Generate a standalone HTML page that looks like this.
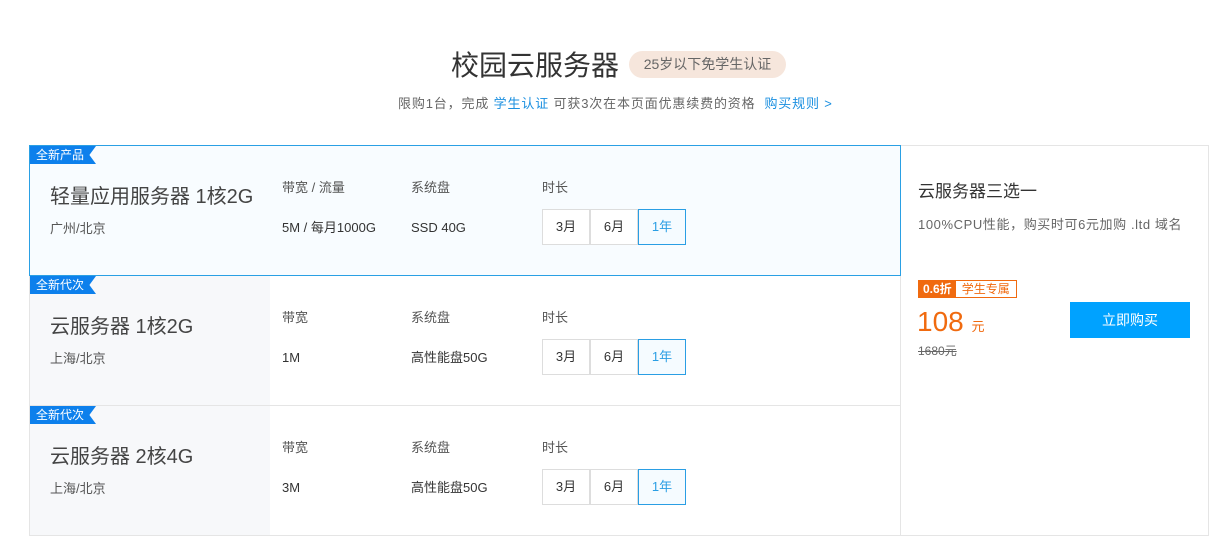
<!DOCTYPE html>
<html><head><meta charset="utf-8"><style>
*{margin:0;padding:0;box-sizing:border-box}
body{width:1217px;height:545px;background:#fff;font-family:"Liberation Sans","Noto Sans CJK SC",sans-serif;color:#333;position:relative;overflow:hidden}
.a{position:absolute;white-space:nowrap}
div{line-height:1.3}
.title{left:0;width:1070px;text-align:center;top:48px;font-size:28px;color:#333}
.badge{left:629px;top:51px;width:157px;height:27px;border-radius:14px;background:#f6e6dc;font-size:14px;color:#666;text-align:center;line-height:27px}
.sub{left:398px;top:96px;font-size:13px;color:#666;letter-spacing:0.85px}
.sub b{font-weight:normal;color:#1a8fe0}
.row{position:absolute;left:29px;width:872px;height:131px;border:1px solid #e5e5e5;background:#fff}
.row .lc{position:absolute;left:0;top:0;bottom:0;width:240px;background:#f7f8fa}
.sel{border:1px solid #2aa0e4;background:#f8fcff;z-index:2}
.tag{position:absolute;left:0;top:0;height:18px;width:66px;background:#0d80ec;color:#fff;font-size:12px;line-height:18px;padding-left:6px;clip-path:polygon(0 0,100% 0,90% 50%,100% 100%,0 100%)}
.name{position:absolute;left:20px;top:38px;font-size:20px;color:#444;line-height:26px}
.loc{position:absolute;left:20px;top:74px;font-size:13px;color:#555;line-height:18px}
.lb{position:absolute;top:33px;font-size:13px;color:#555;line-height:18px}
.vl{position:absolute;top:73px;font-size:13px;color:#333;line-height:18px}
.btn{position:absolute;top:63px;width:48px;height:36px;border:1px solid #ddd;background:#fff;font-size:13px;text-align:center;line-height:34px;color:#333}
.btn.on{border-color:#2a9ee4;color:#2a9ee4;background:#f5fbff;z-index:1}
.right{position:absolute;left:900px;top:145px;width:309px;height:391px;border:1px solid #e5e5e5;border-left:none}
</style></head><body>
<div class="a title">校园云服务器</div>
<div class="a badge">25岁以下免学生认证</div>
<div class="a sub">限购1台，完成 <b>学生认证</b> 可获3次在本页面优惠续费的资格 &nbsp;<b>购买规则 &gt;</b></div>

<div class="row sel" style="top:145px">
<div class="tag">全新产品</div>
<div class="name">轻量应用服务器 1核2G</div><div class="loc">广州/北京</div>
<div class="lb" style="left:252px">带宽 / 流量</div><div class="vl" style="left:252px">5M / 每月1000G</div>
<div class="lb" style="left:381px">系统盘</div><div class="vl" style="left:381px">SSD 40G</div>
<div class="lb" style="left:512px">时长</div>
<div class="btn" style="left:512px">3月</div><div class="btn" style="left:560px">6月</div><div class="btn on" style="left:608px">1年</div>
</div>

<div class="row" style="top:275px"><div class="lc"></div>
<div class="tag">全新代次</div>
<div class="name">云服务器 1核2G</div><div class="loc">上海/北京</div>
<div class="lb" style="left:252px">带宽</div><div class="vl" style="left:252px">1M</div>
<div class="lb" style="left:381px">系统盘</div><div class="vl" style="left:381px">高性能盘50G</div>
<div class="lb" style="left:512px">时长</div>
<div class="btn" style="left:512px">3月</div><div class="btn" style="left:560px">6月</div><div class="btn on" style="left:608px">1年</div>
</div>

<div class="row" style="top:405px"><div class="lc"></div>
<div class="tag">全新代次</div>
<div class="name">云服务器 2核4G</div><div class="loc">上海/北京</div>
<div class="lb" style="left:252px">带宽</div><div class="vl" style="left:252px">3M</div>
<div class="lb" style="left:381px">系统盘</div><div class="vl" style="left:381px">高性能盘50G</div>
<div class="lb" style="left:512px">时长</div>
<div class="btn" style="left:512px">3月</div><div class="btn" style="left:560px">6月</div><div class="btn on" style="left:608px">1年</div>
</div>

<div class="right"></div>
<div class="a" style="left:918px;top:181px;font-size:17px;color:#333">云服务器三选一</div>
<div class="a" style="left:918px;top:217px;font-size:13px;color:#666;letter-spacing:0.6px">100%CPU性能，购买时可6元加购 .ltd 域名</div>
<div class="a" style="left:918px;top:280px;height:18px;border:1px solid #f06a0f;font-size:12px;line-height:16px;display:flex">
<span style="background:#f06a0f;color:#fff;padding:0 4px;font-weight:bold">0.6折</span><span style="color:#f06a0f;padding:0 6px">学生专属</span></div>
<div class="a" style="left:917px;top:305px;font-size:28px;color:#f06a0f;line-height:34px">108 <span style="font-size:13px">元</span></div>
<div class="a" style="left:918px;top:344px;font-size:12px;color:#666;text-decoration:line-through">1680元</div>
<div class="a" style="left:1070px;top:302px;width:120px;height:36px;background:#00a2ff;color:#fff;font-size:14px;text-align:center;line-height:36px">立即购买</div>
</body></html>
